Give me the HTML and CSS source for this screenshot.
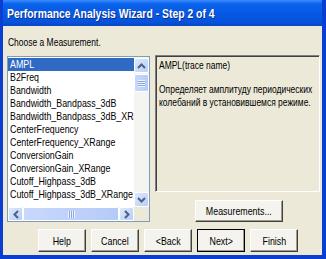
FILE: index.html
```html
<!DOCTYPE html>
<html lang="ru">
<head>
    <meta charset="UTF-8">
    <title>Performance Analysis Wizard - Step 2 of 4</title>
    <link rel="stylesheet" href="styles.css">
</head>
<body>
    <div class="window">
        <div class="titlebar"><span class="t">Performance Analysis Wizard - Step 2 of 4</span></div>

        <div class="content">
            <div class="prompt"><span class="t">Choose a Measurement.</span></div>

            <div class="main">
                <!-- Lista de mediciones -->
                <div class="listbox">
                    <div class="list-area">
                        <ul class="items">
                            <li class="selected"><span class="t">AMPL</span></li>
                            <li><span class="t">B2Freq</span></li>
                            <li><span class="t">Bandwidth</span></li>
                            <li><span class="t">Bandwidth_Bandpass_3dB</span></li>
                            <li><span class="t">Bandwidth_Bandpass_3dB_XRange</span></li>
                            <li><span class="t">CenterFrequency</span></li>
                            <li><span class="t">CenterFrequency_XRange</span></li>
                            <li><span class="t">ConversionGain</span></li>
                            <li><span class="t">ConversionGain_XRange</span></li>
                            <li><span class="t">Cutoff_Highpass_3dB</span></li>
                            <li><span class="t">Cutoff_Highpass_3dB_XRange</span></li>
                        </ul>
                        <div class="vscroll">
                            <div class="sb-btn"><svg width="9" height="6" viewBox="0 0 9 6"><path d="M1 5 L4.5 1.5 L8 5" fill="none" stroke="#4d6185" stroke-width="2"/></svg></div>
                            <div class="sb-thumb v"><span class="grip-v"></span></div>
                            <div class="sb-track"></div>
                            <div class="sb-btn"><svg width="9" height="6" viewBox="0 0 9 6"><path d="M1 1 L4.5 4.5 L8 1" fill="none" stroke="#4d6185" stroke-width="2"/></svg></div>
                        </div>
                    </div>
                    <div class="hscroll">
                        <div class="sb-btn h"><svg width="6" height="9" viewBox="0 0 6 9"><path d="M5 1 L1.5 4.5 L5 8" fill="none" stroke="#4d6185" stroke-width="2"/></svg></div>
                        <div class="sb-thumb h"><span class="grip-h"></span></div>
                        <div class="sb-btn h"><svg width="6" height="9" viewBox="0 0 6 9"><path d="M1 1 L4.5 4.5 L1 8" fill="none" stroke="#4d6185" stroke-width="2"/></svg></div>
                        <div class="sb-corner"></div>
                    </div>
                </div>

                <!-- Descripción -->
                <div class="side">
                    <div class="desc">
                        <p><span class="t">AMPL(trace name)</span></p>
                        <p>
                            <span class="t line">Определяет амплитуду периодических</span>
                            <span class="t line">колебаний в установившемся режиме.</span>
                        </p>
                    </div>
                    <div class="side-actions">
                        <button class="btn wide"><span class="t c">Measurements...</span></button>
                    </div>
                </div>
            </div>

            <div class="buttons">
                <button class="btn"><span class="t c">Help</span></button>
                <button class="btn"><span class="t c">Cancel</span></button>
                <button class="btn"><span class="t c">&lt;Back</span></button>
                <button class="btn default"><span class="t c">Next&gt;</span></button>
                <button class="btn"><span class="t c">Finish</span></button>
            </div>
        </div>
    </div>
</body>
</html>
```

FILE: styles.css
```css
/* Ventana estilo Windows XP */
body {
    margin: 0;
    padding: 0;
    font-family: "Liberation Sans", Arial, sans-serif;
    font-size: 11px;
    color: #000;
}

/* Texto estrecho, como el Tahoma de la captura */
.t {
    display: inline-block;
    white-space: nowrap;
    transform: scaleX(0.77);
    transform-origin: left center;
}

.t.c {
    transform-origin: center center;
}

.t.line {
    display: block;
}

.window {
    width: 326px;
    height: 259px;
    box-sizing: border-box;
    background: #ece9d8;
    border-left: 3px solid #0a3ed0;
    border-right: 4px solid #0a3ed0;
    border-bottom: 4px solid #0a3ed0;
    display: flex;
    flex-direction: column;
    overflow: hidden;
}

.titlebar {
    height: 26px;
    margin: 0 -4px 0 -3px;
    padding-left: 7px;
    background: linear-gradient(#3a8cff 0, #0b62ea 4px, #0558e4 14px, #0653dc 22px, #0a46c4 26px);
    color: #fff;
    font-weight: bold;
    font-size: 13px;
    line-height: 28px;
    white-space: nowrap;
    overflow: hidden;
    text-shadow: 1px 1px 0 #0a2a8a;
}

.titlebar .t {
    transform: scaleX(0.8);
}

.content {
    flex: 1;
    min-width: 0;
    padding: 0 2px 0 4px;
    display: flex;
    flex-direction: column;
}

.prompt {
    height: 29px;
    line-height: 32px;
    padding-left: 1px;
}

.main {
    display: grid;
    grid-template-columns: 143px minmax(0, 1fr);
    column-gap: 5px;
    height: 160px;
}

/* Lista */
.listbox {
    border: 1px solid #7f9db9;
    background: #fff;
    display: flex;
    flex-direction: column;
    margin-top: 1px;
    min-width: 0;
}

.list-area {
    flex: 1;
    display: flex;
    min-height: 0;
}

.items {
    flex: 1;
    min-width: 0;
    list-style: none;
    margin: 0;
    padding: 1px 0 0 0;
    overflow: hidden;
    font-size: 11.5px;
}

.items li {
    height: 13px;
    line-height: 13px;
    padding-left: 2px;
    white-space: nowrap;
}

.items li.selected {
    background: #316ac5;
    color: #fff;
}

/* Barras de desplazamiento */
.vscroll {
    width: 15px;
    flex: none;
    display: flex;
    flex-direction: column;
    background: #f4f4f0;
    padding-top: 1px;
}

.sb-btn {
    width: 15px;
    height: 15px;
    flex: none;
    box-sizing: border-box;
    border: 1px solid #fff;
    border-radius: 2px;
    background: linear-gradient(135deg, #dce8fd, #b9cdf6);
    display: flex;
    align-items: center;
    justify-content: center;
}

.sb-btn.h {
    height: 14px;
}

.sb-thumb {
    box-sizing: border-box;
    border: 1px solid #fff;
    border-radius: 2px;
    background: linear-gradient(90deg, #c9d8fc, #b5cbf7);
    display: flex;
    align-items: center;
    justify-content: center;
}

.sb-thumb.v {
    height: 18px;
    margin-top: 1px;
}

.sb-thumb.h {
    flex: 1;
    height: 14px;
}

.grip-v {
    width: 7px;
    height: 7px;
    background: repeating-linear-gradient(#eef3fe 0 1px, #8ca7e0 1px 2px);
}

.grip-h {
    width: 7px;
    height: 7px;
    background: repeating-linear-gradient(90deg, #eef3fe 0 1px, #8ca7e0 1px 2px);
}

.sb-track {
    flex: 1;
}

.hscroll {
    height: 14px;
    display: flex;
    background: #f4f4f0;
}

.sb-corner {
    width: 15px;
    background: #ece9d8;
}

/* Panel de descripción */
.side {
    display: flex;
    flex-direction: column;
    min-width: 0;
}

.desc {
    height: 137px;
    box-sizing: border-box;
    border: 1px solid;
    border-color: #808080 #fff #fff #808080;
    box-shadow: inset 1px 1px 0 #404040;
    padding: 3px 3px 0 3px;
    line-height: 13px;
    overflow: hidden;
}

.desc p {
    margin: 0 0 11px 0;
}

.side-actions {
    display: flex;
    justify-content: center;
    padding: 8px 0 0 2px;
}

/* Botones */
.btn {
    font-family: inherit;
    font-size: 11.5px;
    width: 48px;
    height: 23px;
    padding: 0;
    background: #f4f3ee;
    border: 1px solid;
    border-color: #fff #404040 #404040 #fff;
    box-shadow: inset -1px -1px 0 #9d9a8e;
    color: #000;
    overflow: hidden;
}

.btn.wide {
    width: 88px;
    height: 22px;
}

.btn.default {
    outline: 1px solid #000;
    outline-offset: -1px;
}

.buttons {
    display: flex;
    gap: 5px;
    padding: 14px 0 0 31px;
}
```
